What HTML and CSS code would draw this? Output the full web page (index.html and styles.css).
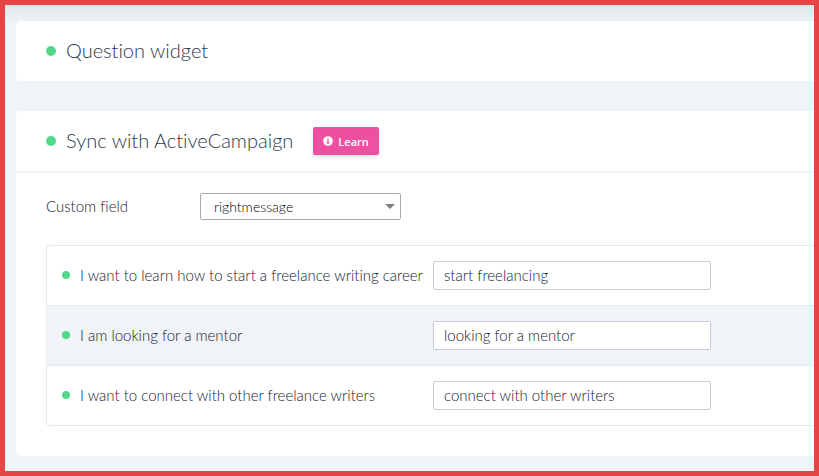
FILE: index.html
```html
<!DOCTYPE html>
<html lang="en">
<head>
  <meta charset="UTF-8">
  <meta name="viewport" content="width=device-width, initial-scale=1.0">
  <title>Question widget</title>
  <link rel="stylesheet" href="styles.css">
</head>
<body>
  <main class="page">
    <section class="card">
      <header class="card-header">
        <span class="dot"></span>
        <h2>Question widget</h2>
      </header>
    </section>

    <section class="card">
      <header class="card-header divided">
        <span class="dot"></span>
        <h2>Sync with ActiveCampaign</h2>
        <button type="button" class="learn">
          <svg viewBox="0 0 512 512" width="10" height="10" aria-hidden="true">
            <path fill="currentColor" fill-rule="evenodd" d="M256 8a248 248 0 1 0 0 496a248 248 0 1 0 0-496zM256 110a42 42 0 1 1 0 84a42 42 0 1 1 0-84zM200 224h100v128h24v48H188v-48h24v-80h-12z"/>
          </svg>
          Learn
        </button>
      </header>

      <div class="card-body">
        <div class="field">
          <label for="customField">Custom field</label>
          <div class="select">
            <select id="customField">
              <option>rightmessage</option>
            </select>
          </div>
        </div>

        <div class="answers">
          <div class="answer">
            <span class="dot small"></span>
            <label for="answer1">I want to learn how to start a freelance writing career</label>
            <input type="text" id="answer1" value="start freelancing">
          </div>
          <div class="answer">
            <span class="dot small"></span>
            <label for="answer2">I am looking for a mentor</label>
            <input type="text" id="answer2" value="looking for a mentor">
          </div>
          <div class="answer">
            <span class="dot small"></span>
            <label for="answer3">I want to connect with other freelance writers</label>
            <input type="text" id="answer3" value="connect with other writers">
          </div>
        </div>
      </div>
    </section>
  </main>
</body>
</html>
```

FILE: styles.css
```css
* {
  box-sizing: border-box;
}

body {
  font-family: Lato, "Open Sans", sans-serif;
  font-size: 15px;
  font-weight: 300;
  font-variant-ligatures: none;
  margin: 0;
  min-height: 100vh;
  border: 5px solid #e64545;
  background-color: #f0f3f8;
  color: #142233;
}

.page {
  padding: 16px 0 15px 11px;
  display: flex;
  flex-direction: column;
  gap: 30px;
  /* shadow cast by the bar above */
  background: linear-gradient(#e1e4e9, #f0f3f8 18px);
}

.card {
  background-color: #fff;
  border-radius: 5px 0 0 5px;
}

.card-header {
  display: flex;
  align-items: center;
  height: 60px;
  padding: 0 30px;
}

.card-header.divided {
  height: 62px;
  border-bottom: 2px solid #f0f3f8;
}

h2 {
  margin: 0 20px 0 10px;
  padding-bottom: 2px;
  font-size: 20px;
  font-weight: 300;
  line-height: 24px;
  color: #2c3a4a;
}

label {
  padding-bottom: 2px;
}

.dot {
  flex: none;
  width: 10px;
  height: 10px;
  border-radius: 50%;
  background-color: #51d88a;
}

.dot.small {
  width: 8px;
  height: 8px;
  margin-bottom: 1px;
}

.learn {
  display: flex;
  align-items: center;
  gap: 5px;
  height: 28px;
  padding: 0 10px;
  border: none;
  border-radius: 2px;
  background-color: #ee4f9f;
  box-shadow: 0 2px 4px rgba(0, 0, 0, 0.12);
  color: #fff;
  font-family: "Open Sans", sans-serif;
  font-size: 11px;
  font-weight: 600;
  cursor: pointer;
}

.card-body {
  padding: 20px 0 30px 30px;
}

.field {
  display: flex;
  align-items: center;
  margin-bottom: 25px;
}

.field label {
  width: 154px;
}

.select {
  position: relative;
  width: 201px;
}

.select::after {
  content: "";
  position: absolute;
  top: 11px;
  right: 6px;
  border: 5px solid transparent;
  border-top-color: #808080;
  border-bottom: none;
  pointer-events: none;
}

select {
  display: block;
  appearance: none;
  width: 100%;
  height: 27px;
  padding: 0 24px 0 13px;
  border: 1px solid #aaa;
  border-radius: 2px;
  background-color: #fff;
  color: #000;
  font-family: inherit;
  font-size: 14px;
  font-weight: 300;
}

.answers {
  border: 1px solid #e6eaee;
  border-right: none;
  border-radius: 4px 0 0 4px;
}

.answer {
  display: flex;
  align-items: center;
  height: 60px;
  padding: 0 15px;
  border-bottom: 1px solid #e6eaee;
}

.answer:last-child {
  height: 59px;
  border-bottom: none;
}

.answer:nth-child(even) {
  background-color: #f0f3f8;
}

.answer label {
  width: 343px;
  margin-left: 10px;
  margin-right: 10px;
  white-space: nowrap;
}

input {
  width: 278px;
  height: 29px;
  padding: 0 10px 2px;
  border: 1px solid #c8ccd6;
  border-radius: 2px;
  background-color: #fff;
  color: #142233;
  font-family: inherit;
  font-size: 15px;
  font-weight: 300;
}
```
